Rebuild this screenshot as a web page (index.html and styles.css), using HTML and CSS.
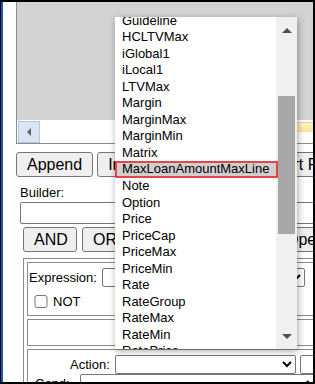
FILE: index.html
```html
<!DOCTYPE html>
<html lang="en">
<head>
    <meta charset="UTF-8">
    <meta name="viewport" content="width=device-width, initial-scale=1.0">
    <title>Rule Builder</title>
    <link rel="stylesheet" href="styles.css">
</head>
<body>
    <div class="screen">
        <div class="viewer">
            <div class="viewer-area"></div>
            <div class="hscroll">
                <div class="hbtn"><span class="tri-left"></span></div>
                <div class="htrack"><div class="hthumb"></div></div>
            </div>
        </div>

        <div class="toolbar">
            <button class="btn">Append</button>
            <button class="btn">Insert</button>
            <button class="btn">Replace</button>
            <button class="btn">Insert Field</button>
        </div>

        <div class="builder">
            <label class="builder-label">Builder:</label>
            <input class="builder-input" type="text">
        </div>

        <div class="ops">
            <button class="btn">AND</button>
            <button class="btn">OR</button>
            <button class="btn">NOT</button>
            <button class="btn">Open (</button>
        </div>

        <div class="panel">
            <div class="cell expr">
                <div class="expr-line">
                    <span>Expression:</span>
                    <select class="sel sel-expr"><option></option></select>
                </div>
                <label class="not"><input type="checkbox"> NOT</label>
            </div>
            <div class="cell empty"></div>
            <div class="cell action">
                <div class="action-line">
                    <span>Action:</span>
                    <select class="sel sel-action"><option></option></select>
                    <select class="sel sel-small"><option></option></select>
                </div>
                <div class="cond-line">
                    <span>Cond:</span>
                    <select class="sel sel-cond"><option></option></select>
                </div>
            </div>
        </div>

        <div class="dropdown">
            <ul class="opts">
                <li>Guideline</li>
                <li>HCLTVMax</li>
                <li>iGlobal1</li>
                <li>iLocal1</li>
                <li>LTVMax</li>
                <li>Margin</li>
                <li>MarginMax</li>
                <li>MarginMin</li>
                <li>Matrix</li>
                <li class="selected">MaxLoanAmountMaxLine</li>
                <li>Note</li>
                <li>Option</li>
                <li>Price</li>
                <li>PriceCap</li>
                <li>PriceMax</li>
                <li>PriceMin</li>
                <li>Rate</li>
                <li>RateGroup</li>
                <li>RateMax</li>
                <li>RateMin</li>
                <li>RatePrice</li>
            </ul>
            <div class="vscroll">
                <span class="tri-up"></span>
                <div class="vthumb"></div>
                <span class="tri-down"></span>
            </div>
        </div>
    </div>
</body>
</html>
```

FILE: styles.css
```css
body {
    margin: 0;
    padding: 2px 2px 2px 1px;
    background-color: #000;
    font-family: "Liberation Sans", Arial, sans-serif;
    font-size: 13px;
    color: #000;
}
.screen {
    position: relative;
    width: 312px;
    height: 380px;
    box-sizing: border-box;
    border-left: 2px solid #0a5fb4;
    background-color: #fff;
    overflow: hidden;
}

/* grey viewer with its horizontal scrollbar */
.viewer {
    margin-left: 13px;
    margin-right: -30px;
    border-left: 1px solid #8c8c8c;
    border-bottom: 1px solid #8c8c8c;
}
.viewer-area {
    height: 118px;
    background-color: #d3d3d3;
}
.hscroll {
    display: flex;
    height: 23px;
    padding: 1px 0 0 1px;
    box-sizing: border-box;
}
.hbtn {
    width: 20px;
    height: 20px;
    background-color: #dae5f3;
    border: 1px solid #b3c7e0;
    display: flex;
    align-items: center;
    justify-content: center;
}
.tri-left {
    width: 0;
    height: 0;
    border-top: 4px solid transparent;
    border-bottom: 4px solid transparent;
    border-right: 4px solid #606060;
}
.htrack {
    flex: 1;
    background-color: #fff;
}
.hthumb {
    margin: 1px 0 0 240px;
    height: 9px;
    background: linear-gradient(#fff3c8, #fbe49a);
    border-top: 1px solid #f1d27c;
}

/* buttons */
.btn {
    font-family: "Liberation Sans", Arial, sans-serif;
    font-size: 16px;
    height: 25px;
    padding: 0 10px;
    background-color: #efefef;
    border: 1px solid #767676;
    border-radius: 3px;
    color: #000;
    white-space: nowrap;
    flex-shrink: 0;
}
.toolbar {
    display: flex;
    gap: 4px;
    margin: 8px 0 0 13px;
}
.toolbar .btn:nth-child(3) {
    width: 85px;
}

.builder {
    margin: 8px 0 0 17px;
}
.builder-label {
    display: block;
    line-height: 16px;
}
.builder-input {
    display: block;
    width: 320px;
    height: 22px;
    box-sizing: border-box;
    margin-top: 1px;
    border: 1px solid #767676;
    border-radius: 2px;
}

.ops {
    display: flex;
    gap: 5px;
    margin: 3px 0 0 20px;
}
.ops .btn:first-child {
    width: 54px;
}
.ops .btn:nth-child(3) {
    width: 137px;
}

/* expression panel */
.panel {
    margin: 6px -40px 0 20px;
    border: 1px solid #8c8c8c;
    padding: 3px;
}
.cell {
    border: 1px solid #8c8c8c;
    margin-bottom: 3px;
}
.expr {
    height: 54px;
    padding: 5px 0 0 1px;
    box-sizing: border-box;
}
.expr-line {
    display: flex;
    align-items: center;
    gap: 5px;
}
.sel {
    font-family: "Liberation Sans", Arial, sans-serif;
    font-size: 13px;
    height: 19px;
    background-color: #fff;
    border: 1px solid #767676;
    border-radius: 2px;
}
.sel-expr {
    width: 203px;
}
.not {
    display: flex;
    align-items: center;
    margin: 7px 0 0 5px;
}
.not input {
    margin: 0 5px 0 0;
    width: 14px;
    height: 13px;
}
.empty {
    height: 25px;
}
.action {
    height: 40px;
    padding-top: 5px;
    box-sizing: border-box;
}
.action-line {
    display: flex;
    align-items: center;
    gap: 5px;
    margin-left: 42px;
}
.sel-action {
    width: 181px;
}
.sel-small {
    width: 40px;
    margin-left: -1px;
}
.cond-line {
    display: flex;
    align-items: center;
    gap: 10px;
    margin: 0 0 0 7px;
}
.sel-cond {
    width: 240px;
}

/* open dropdown list */
.dropdown {
    position: absolute;
    left: 112px;
    top: 15px;
    width: 182px;
    height: 332px;
    background-color: #fff;
    box-shadow: 1px 2px 7px rgba(0, 0, 0, 0.35);
    overflow: hidden;
}
.opts {
    list-style: none;
    margin: -4.5px 0 0 0;
    padding: 0;
    width: 161px;
}
.opts li {
    height: 16.55px;
    line-height: 16.55px;
    padding-left: 7px;
    white-space: nowrap;
}
.opts li.selected {
    position: relative;
    z-index: 1;
    width: calc(100% + 2px);
    box-sizing: border-box;
    background-color: #cfcfcf;
    outline: 2px solid #e8424a;
    outline-offset: -2px;
}
.vscroll {
    position: absolute;
    top: 0;
    right: 0;
    width: 21px;
    height: 100%;
    background-color: #f0f0f0;
}
.tri-up,
.tri-down {
    position: absolute;
    left: 6px;
    width: 0;
    height: 0;
    border-left: 5px solid transparent;
    border-right: 5px solid transparent;
}
.tri-up {
    top: 11px;
    border-bottom: 5px solid #505050;
}
.tri-down {
    bottom: 10px;
    border-top: 5px solid #505050;
}
.vthumb {
    position: absolute;
    left: 2px;
    top: 79px;
    width: 17px;
    height: 138px;
    background-color: #a8a8a8;
}
```
